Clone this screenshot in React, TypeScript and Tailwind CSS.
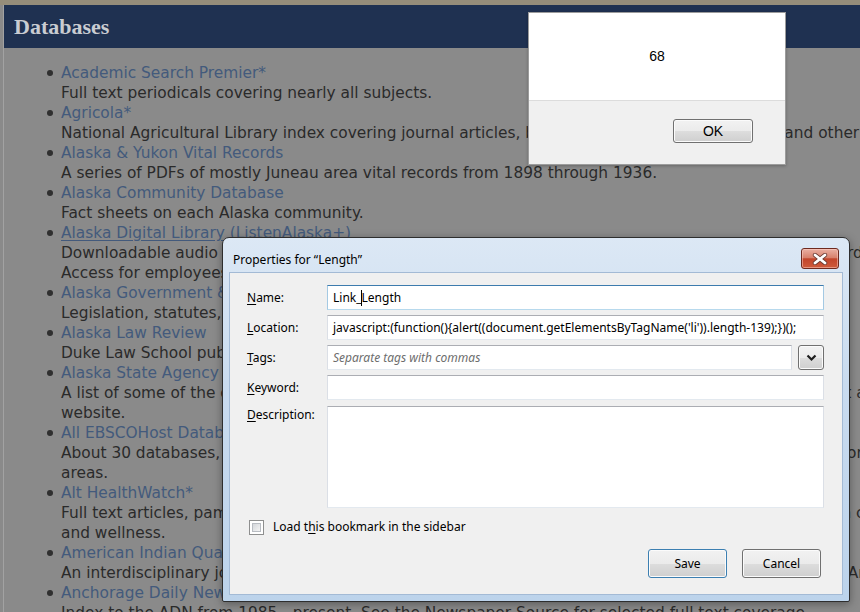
import React from "react";

type Item = { link: string; desc: string[]; underline?: boolean };

const items: Item[] = [
  { link: "Academic Search Premier*", desc: ["Full text periodicals covering nearly all subjects."] },
  {
    link: "Agricola*",
    desc: ["National Agricultural Library index covering journal articles, book chapters, technical reports, and other resources."],
  },
  {
    link: "Alaska & Yukon Vital Records",
    desc: ["A series of PDFs of mostly Juneau area vital records from 1898 through 1936."],
  },
  { link: "Alaska Community Database", desc: ["Fact sheets on each Alaska community."] },
  {
    link: "Alaska Digital Library (ListenAlaska+)",
    underline: true,
    desc: [
      "Downloadable audio books, e-Books, videos, and music for Alaskans, with a public or school library card,",
      "Access for employees of the State of Alaska is available through the state library.",
    ],
  },
  {
    link: "Alaska Government & Legislative Information",
    desc: ["Legislation, statutes, regulations, and other information from the Alaska Legislature."],
  },
  { link: "Alaska Law Review", desc: ["Duke Law School publishes this journal on Alaska law and legal issues."] },
  {
    link: "Alaska State Agency Publications",
    desc: [
      "A list of some of the official reports and other publications published by the Alaska state agencies that are on their",
      "website.",
    ],
  },
  {
    link: "All EBSCOHost Databases",
    desc: [
      "About 30 databases, with scholarly full text and indexing for a variety of the academic disciplines major subject",
      "areas.",
    ],
  },
  {
    link: "Alt HealthWatch*",
    desc: [
      "Full text articles, pamphlets, reports, and research on the holistic and integrated approaches to health care",
      "and wellness.",
    ],
  },
  {
    link: "American Indian Quarterly",
    desc: [
      "An interdisciplinary journal of the anthropology, history, literature, religion, politics, law, film, and the Arts of Native Americans.",
    ],
  },
  {
    link: "Anchorage Daily News",
    desc: ["Index to the ADN from 1985 - present. See the Newspaper Source for selected full text coverage."],
  },
];

const btn =
  "border rounded-[3px] bg-[linear-gradient(to_bottom,#f2f2f2_0%,#ebebeb_50%,#dddddd_51%,#cfcfcf_100%)] shadow-[inset_0_0_0_1px_#fbfbfb] flex items-center justify-center text-black";

const inputBase = "bg-white border border-t-[#abadb3] border-x-[#dbdfe6] border-b-[#e3e9ef] h-[25px] flex items-center pl-[5px]";

function U({ c }: { c: string }) {
  return <span className="underline underline-offset-[2px]">{c}</span>;
}

export default function App() {
  return (
    <div className="relative w-[860px] h-[612px] overflow-hidden bg-[#8a8a8a]">
      <div className="h-[5px] bg-[#958d7a]" />
      <div className="ml-[3px] border-l border-[#a2a2a2] h-[607px]">
        <div className="h-[43px] bg-[#1f3151] flex items-center pl-[10px]">
          <h1 className="font-['Liberation_Serif',serif] font-bold text-[22px] text-[#c9ccd1] leading-none">Databases</h1>
        </div>
        <ul className="pt-[15px] font-['DejaVu_Sans',sans-serif] text-[15.4px] leading-[20px] whitespace-nowrap">
          {items.map((it) => (
            <li key={it.link}>
              <div className="flex items-center h-[20px]">
                <span className="w-[57px] flex justify-end pr-[8px]">
                  <span className="w-[6px] h-[6px] rounded-full bg-[#2f2f2f]" />
                </span>
                <a className={"text-[#435a7c] " + (it.underline ? "underline underline-offset-[2px]" : "")}>{it.link}</a>
              </div>
              {it.desc.map((d, i) => (
                <div key={i} className="pl-[57px] h-[20px] text-[#2a2a2a]">
                  {d}
                </div>
              ))}
            </li>
          ))}
        </ul>
      </div>

      {/* alert */}
      <div className="absolute left-[528px] top-[12px] w-[258px] h-[153px] border border-[#9c9c9c] bg-white flex flex-col font-['Liberation_Sans',Arial,sans-serif] shadow-[0_1px_3px_rgba(0,0,0,0.25)]">
        <div className="h-[87px] flex items-center justify-center text-[14px] text-black">68</div>
        <div className="flex-1 bg-[#f0f0f0] border-t border-[#dcdcdc] flex justify-end pt-[18px] pr-[32px]">
          <div className={btn + " border-[#707070] w-[80px] h-[24px] text-[14px]"}>OK</div>
        </div>
      </div>

      {/* properties dialog */}
      <div className="absolute left-[222px] top-[237px] w-[628px] h-[365px] rounded-t-[7px] rounded-b-[2px] border border-[#2e2e2e] bg-[linear-gradient(to_bottom,#dce8f5_0%,#c9dbef_40%,#bcd3eb_100%)] flex flex-col font-['Noto_Sans',sans-serif] text-[12px] text-black shadow-[0_2px_8px_rgba(0,0,0,0.35)]">
        <div className="h-[34px] flex items-start">
          <span className="ml-[10px] mt-[14px] leading-[16px]">Properties for “Length”</span>
          <div className="ml-auto mr-[10px] mt-[10px] w-[38px] h-[21px] rounded-[3px] border border-[#6e2a1f] bg-[linear-gradient(to_bottom,#eab0a3_0%,#d8826d_45%,#c2452b_52%,#cf5b3c_100%)] shadow-[inset_0_0_0_1px_rgba(255,210,200,0.5)] flex items-center justify-center">
            <svg width="16" height="12" viewBox="0 0 16 12">
              <path d="M3 2 L13 10 M13 2 L3 10" stroke="#6a3a32" strokeWidth="4.4" strokeLinecap="round" />
              <path d="M3 2 L13 10 M13 2 L3 10" stroke="#ffffff" strokeWidth="2.8" strokeLinecap="round" />
            </svg>
          </div>
        </div>
        <div className="mx-[6px] mb-[6px] flex-1 bg-[#f0f0f0] border border-[#a3bad5] pt-[12px] pl-[17px] pr-[18px] flex flex-col">
          <div className="flex items-center h-[25px]">
            <span className="w-[80px]">
              <U c="N" />ame:
            </span>
            <div className="flex-1 bg-white border border-t-[#3d7bad] border-x-[#a4c9e3] border-b-[#b7d9ed] h-[25px] flex items-center pl-[5px]">
              <span>Link_</span>
              <span className="w-[1px] h-[16px] bg-black -ml-[1px]" />
              <span>Length</span>
            </div>
          </div>
          <div className="flex items-center h-[25px] mt-[5px]">
            <span className="w-[80px]">
              <U c="L" />ocation:
            </span>
            <div className={inputBase + " flex-1 overflow-hidden whitespace-nowrap"}>
              javascript:(function(){"{"}alert((document.getElementsByTagName('li')).length-139);{"}"})();
            </div>
          </div>
          <div className="flex items-center h-[25px] mt-[5px]">
            <span className="w-[80px]">
              <U c="T" />ags:
            </span>
            <div className={inputBase + " flex-1 italic text-[#6d6d6d]"}>Separate tags with commas</div>
            <div className={btn + " border-[#707070] w-[26px] h-[25px] ml-[6px]"}>
              <svg width="11" height="8" viewBox="0 0 11 8">
                <path d="M1.5 1.5 L5.5 5.5 L9.5 1.5" stroke="#1e1e1e" strokeWidth="2.2" fill="none" />
              </svg>
            </div>
          </div>
          <div className="flex items-center h-[25px] mt-[5px]">
            <span className="w-[80px]">
              <U c="K" />eyword:
            </span>
            <div className={inputBase + " flex-1"} />
          </div>
          <div className="flex items-start h-[102px] mt-[6px]">
            <span className="w-[80px] pt-[1px] leading-[16px]">
              <U c="D" />escription:
            </span>
            <div className="flex-1 h-[102px] bg-white border border-t-[#abadb3] border-x-[#dbdfe6] border-b-[#e3e9ef]" />
          </div>
          <div className="flex items-center h-[20px] mt-[9px] pl-[2px]">
            <span className="w-[15px] h-[15px] border border-[#8e8f8f] bg-white p-[2px]">
              <span className="block w-full h-full border border-[#b8bcc2] bg-[linear-gradient(135deg,#d4d7db_0%,#f4f4f4_100%)]" />
            </span>
            <span className="ml-[9px]">
              Load t<U c="h" />is bookmark in the sidebar
            </span>
          </div>
          <div className="flex justify-end mt-[12px] mr-[3px] gap-[15px]">
            <div className={btn + " border-[#3c7fb1] shadow-[inset_0_0_0_1px_#bfe3f7] w-[79px] h-[29px]"}>Save</div>
            <div className={btn + " border-[#707070] w-[79px] h-[29px]"}>Cancel</div>
          </div>
        </div>
      </div>
    </div>
  );
}
